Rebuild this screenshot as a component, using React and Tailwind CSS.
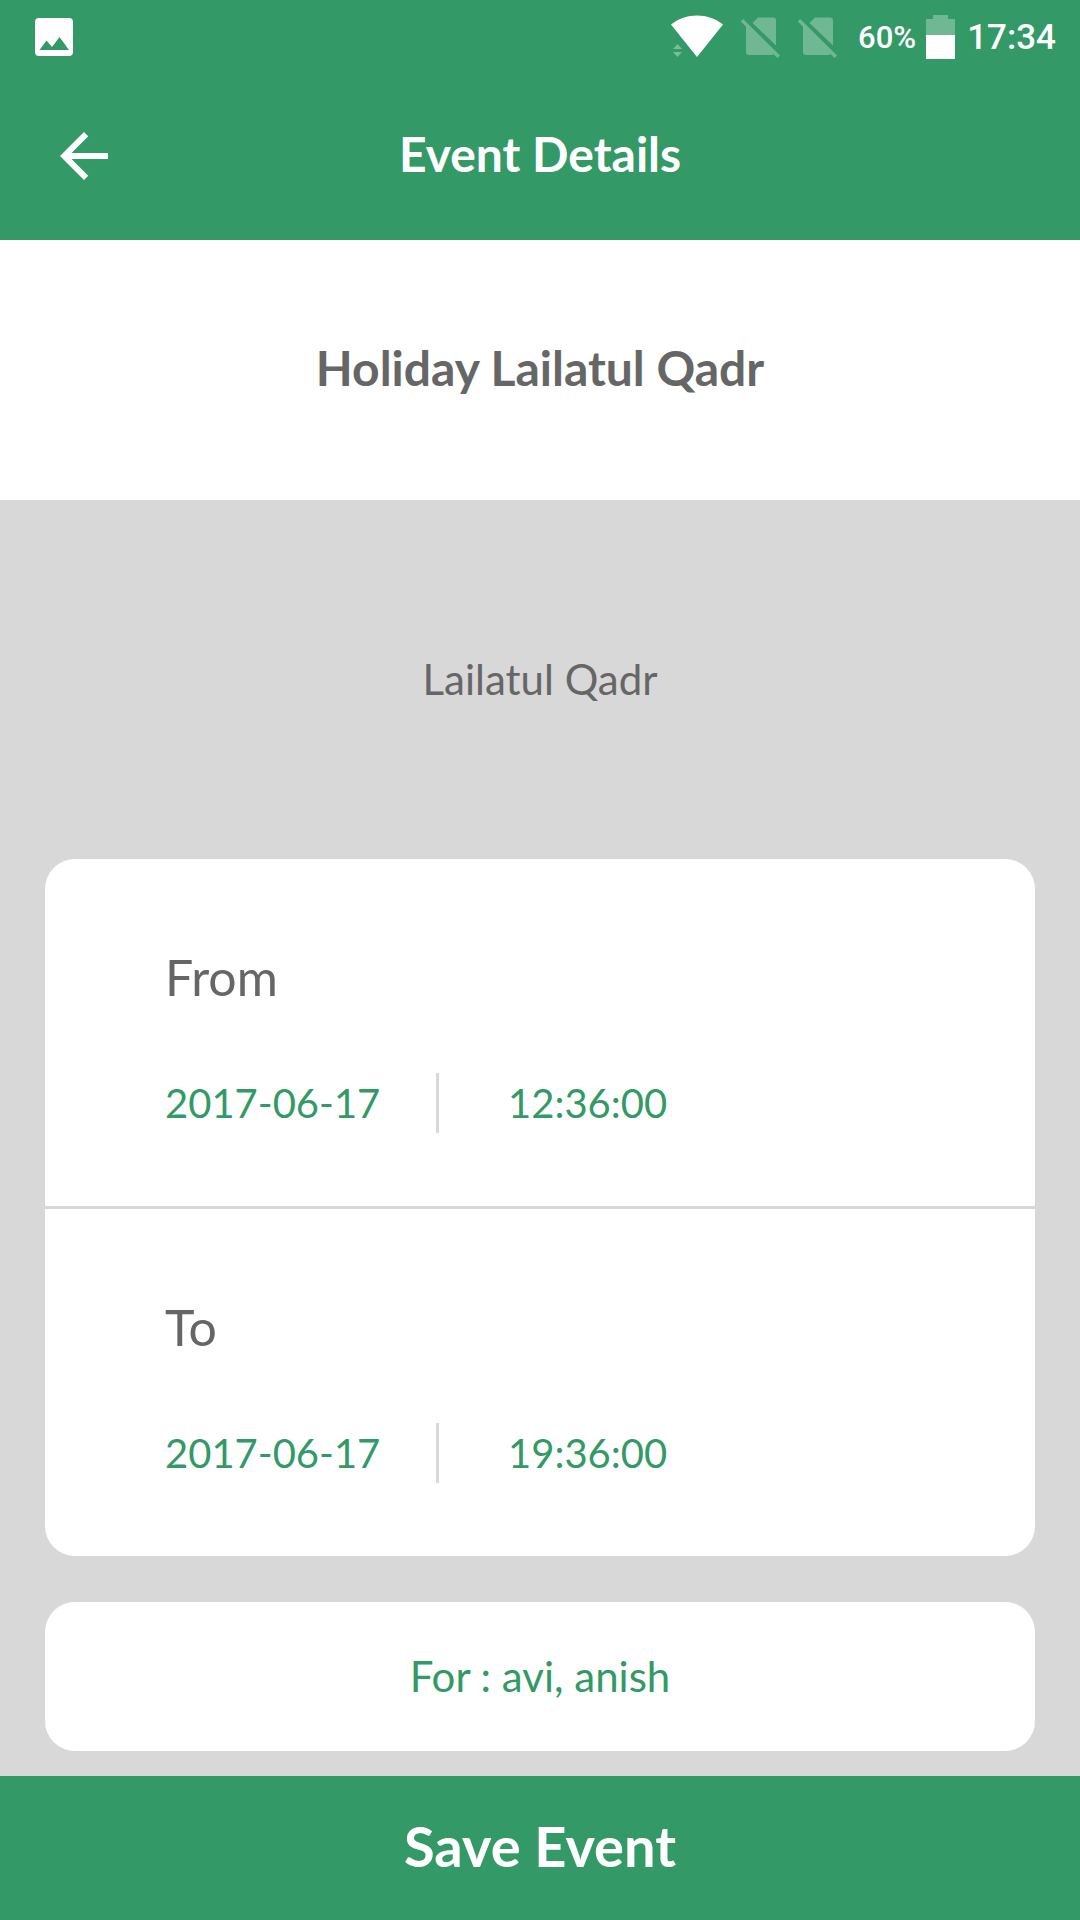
const event = {
  title: 'Holiday Lailatul Qadr',
  description: 'Lailatul Qadr',
  from: { date: '2017-06-17', time: '12:36:00' },
  to: { date: '2017-06-17', time: '19:36:00' },
  members: ['avi', 'anish'],
};

function ImageIcon() {
  return (
    <svg viewBox="0 0 38 38" className="size-[38px]" aria-hidden="true">
      <rect width="38" height="38" rx="4" fill="#fff" />
      <path d="M4.5 32 L11.5 22.5 L17 29 L24.5 19 L34 32 Z" fill="#339966" />
    </svg>
  );
}

function WifiIcon() {
  return (
    <svg viewBox="0 0 54 44" className="w-[54px] h-11" aria-hidden="true">
      <path d="M1 9.5 C16 -2.5 38 -2.5 53 9.5 L27 42 Z" fill="#fff" />
      <path d="M3 34 L7.5 29 L12 34 Z M3 37 H12 L7.5 42 Z" fill="#fff" fillOpacity="0.35" />
    </svg>
  );
}

function NoSimIcon() {
  return (
    <svg viewBox="0 0 40 42" className="w-10 h-[42px]" aria-hidden="true">
      <g fill="#fff" fillOpacity="0.3">
        <path d="M12.5 7 L18 1.5 H33 Q36 1.5 36 4.5 V29.5 Z" />
        <path d="M6 10.5 L33.5 38 Q32.8 39 31 39 H9 Q6 39 6 36 Z" />
        <path d="M3.2 3 L40 39.5 L37.5 42 L0.7 5.5 Z" />
      </g>
    </svg>
  );
}

function BatteryIcon() {
  return (
    <svg viewBox="0 0 29 44" className="w-[29px] h-11" aria-hidden="true">
      <path d="M7 0 H22 V4 H29 V20 H0 V4 H7 Z" fill="#fff" fillOpacity="0.3" />
      <path d="M0 20 H29 V44 H0 Z" fill="#fff" />
    </svg>
  );
}

function StatusBar() {
  return (
    <div className="flex items-center justify-between h-[72px] pt-0.5 pl-[35px] pr-6 text-white font-medium font-['Roboto',sans-serif]">
      <ImageIcon />
      <div className="flex items-center">
        <WifiIcon />
        <div className="flex items-center gap-[17px] ml-4">
          <NoSimIcon />
          <NoSimIcon />
        </div>
        <span className="ml-[21px] pt-0.5 text-[31px] leading-9">60%</span>
        <span className="ml-2.5"><BatteryIcon /></span>
        <span className="ml-3 pt-0.5 text-[35px] leading-10">17:34</span>
      </div>
    </div>
  );
}

function DateRow({ label, value }) {
  return (
    <div className="px-[120px] pt-[88px] pb-[73px]">
      <h3 className="text-[50px] leading-[60px]">{label}</h3>
      <div className="flex items-center h-[60px] mt-[66px] text-[40px] text-[#339966]">
        <time className="w-[271px]">{value.date}</time>
        <span className="w-[3px] h-full bg-[#d8d8d8]" />
        <time className="ml-[69px]">{value.time}</time>
      </div>
    </div>
  );
}

export default function App() {
  return (
    <div className="min-h-screen flex flex-col bg-[#d8d8d8] text-[#666666] font-['Lato',sans-serif]">
      <header className="bg-[#339966] text-white">
        <StatusBar />
        <div className="grid grid-cols-[72px_1fr_72px] items-center h-[168px] px-12">
          <button type="button" aria-label="Back">
            <svg viewBox="0 0 24 24" className="size-[72px]" fill="currentColor" aria-hidden="true">
              <path d="M20 11H7.83l5.59-5.59L12 4l-8 8 8 8 1.41-1.41L7.83 13H20v-2z" />
            </svg>
          </button>
          <h1 className="pb-1 text-center text-[48px] font-bold">Event Details</h1>
        </div>
      </header>

      <main className="flex-1 flex flex-col">
        <div className="flex items-center justify-center h-[260px] pb-1 bg-white">
          <h2 className="text-[48px] font-bold">{event.title}</h2>
        </div>

        <p className="py-[150px] text-center text-[42px] leading-[59px]">{event.description}</p>

        <section className="mx-[45px] rounded-[30px] bg-white divide-y-3 divide-[#d8d8d8]">
          <DateRow label="From" value={event.from} />
          <DateRow label="To" value={event.to} />
        </section>

        <section className="mx-[45px] mt-[46px] mb-[25px] py-11 rounded-[30px] bg-white text-center text-[42px] leading-[61px] text-[#339966]">
          For : {event.members.join(', ')}
        </section>
      </main>

      <button type="button" className="w-full h-36 pb-1 bg-[#339966] text-white text-[56px] font-bold">
        Save Event
      </button>
    </div>
  );
}
